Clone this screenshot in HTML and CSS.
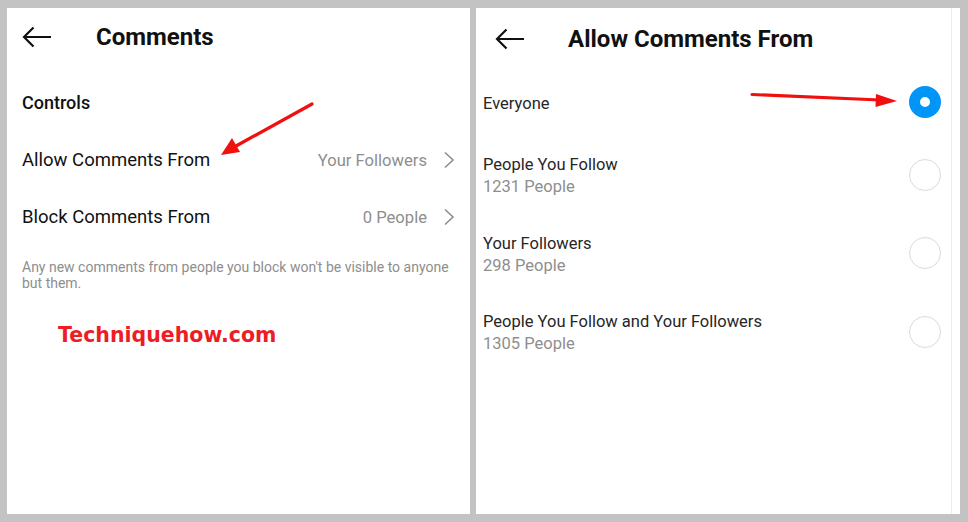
FILE: index.html
```html
<!DOCTYPE html>
<html>
<head>
<meta charset="utf-8">
<link rel="stylesheet" href="styles.css">
</head>
<body>
<div class="stage">
  <section class="panel left">
    <header class="bar">
      <svg class="back" width="30" height="22" viewBox="0 0 30 22"><path d="M29 11H2M11.5 1.5L2 11l9.5 9.5" fill="none" stroke="#111" stroke-width="2.2"/></svg>
      <h1 class="title">Comments</h1>
    </header>
    <h2 class="section">Controls</h2>
    <div class="setting">
      <span class="setting-label">Allow Comments From</span>
      <span class="setting-value">Your Followers</span>
      <svg class="chev" width="12" height="18" viewBox="0 0 12 18"><path d="M2 1.5l8 7.5-8 7.5" fill="none" stroke="#8e8e8e" stroke-width="1.6"/></svg>
    </div>
    <div class="setting">
      <span class="setting-label">Block Comments From</span>
      <span class="setting-value">0 People</span>
      <svg class="chev" width="12" height="18" viewBox="0 0 12 18"><path d="M2 1.5l8 7.5-8 7.5" fill="none" stroke="#8e8e8e" stroke-width="1.6"/></svg>
    </div>
    <p class="note">Any new comments from people you block won't be visible to anyone but them.</p>
    <p class="brand">Techniquehow.com</p>
  </section>
  <section class="panel right">
    <div class="inner">
      <header class="bar bar-r">
        <svg class="back" width="30" height="22" viewBox="0 0 30 22"><path d="M29 11H2M11.5 1.5L2 11l9.5 9.5" fill="none" stroke="#111" stroke-width="2.2"/></svg>
        <h1 class="title">Allow Comments From</h1>
      </header>
      <div class="option first">
        <div class="opt-text"><div class="opt-name">Everyone</div></div>
        <span class="radio on"></span>
      </div>
      <div class="option">
        <div class="opt-text"><div class="opt-name">People You Follow</div><div class="opt-sub">1231 People</div></div>
        <span class="radio"></span>
      </div>
      <div class="option">
        <div class="opt-text"><div class="opt-name">Your Followers</div><div class="opt-sub">298 People</div></div>
        <span class="radio"></span>
      </div>
      <div class="option">
        <div class="opt-text"><div class="opt-name">People You Follow and Your Followers</div><div class="opt-sub">1305 People</div></div>
        <span class="radio"></span>
      </div>
    </div>
  </section>
  <svg class="annot" width="968" height="522" viewBox="0 0 968 522">
    <line x1="312" y1="104" x2="236" y2="146" stroke="#f01010" stroke-width="3.2" stroke-linecap="round"/>
    <polygon points="221,155 232,138 240,152" fill="#f01010"/>
    <line x1="752" y1="94.5" x2="880" y2="100" stroke="#f01010" stroke-width="3.2" stroke-linecap="round"/>
    <polygon points="897,101 876,94 875.5,107" fill="#f01010"/>
  </svg>
</div>
</body>
</html>
```
FILE: styles.css
```css
* { box-sizing: border-box; }
html, body { margin: 0; padding: 0; }
body {
  background: #c3c3c3;
  font-family: Roboto, "Liberation Sans", sans-serif;
  color: #262626;
}
.stage {
  position: relative;
  width: 968px;
  height: 522px;
  display: flex;
  gap: 6px;
  padding: 8px 8px 8px 7px;
}
.panel {
  background: #fff;
  height: 506px;
}
.left {
  width: 463px;
  padding: 0 15px;
}
.right {
  width: 484px;
  padding-right: 8px;
}
.inner {
  height: 100%;
  border-right: 1px solid #ededed;
  padding: 0 10px 0 7px;
}
.bar {
  height: 58px;
  display: flex;
  align-items: center;
}
.bar-r { height: 62px; padding-left: 12px; }
.back { flex: none; }
.title {
  margin: 0 0 0 44px;
  font-size: 24px;
  font-weight: 700;
  color: #111;
}
.bar-r .title { margin-left: 43px; }
.section {
  margin: 25px 0 0;
  font-size: 18px;
  font-weight: 500;
  line-height: 24px;
  color: #111;
}
.setting {
  height: 57px;
  display: flex;
  align-items: center;
}
.section + .setting { margin-top: 16.5px; }
.setting-label {
  flex: 1;
  font-size: 18.5px;
  color: #111;
}
.setting-value {
  font-size: 16.6px;
  color: #8e8e8e;
  margin-right: 16px;
}
.chev { flex: none; }
.note {
  margin: 13px 0 0;
  font-size: 14px;
  line-height: 16px;
  color: #8e8e8e;
}
.brand {
  margin: 29px 0 0 36px;
  font-family: "DejaVu Sans", sans-serif;
  font-weight: 700;
  font-size: 20.5px;
  line-height: 30px;
  color: #ee1c25;
}
.option {
  height: 78.5px;
  display: flex;
  align-items: center;
}
.option.first { height: 67px; }
.opt-text { flex: 1; }
.opt-name { font-size: 16.5px; line-height: 22px; color: #262626; }
.opt-sub { font-size: 16.5px; line-height: 22px; color: #8e8e8e; }
.radio {
  flex: none;
  width: 32px;
  height: 32px;
  border-radius: 50%;
  border: 1px solid #dbdbdb;
  margin-bottom: 3px;
}
.radio.on {
  border: 11px solid #0095f6;
  background: #fff;
}
.annot {
  position: absolute;
  left: 0;
  top: 0;
  pointer-events: none;
}
```
